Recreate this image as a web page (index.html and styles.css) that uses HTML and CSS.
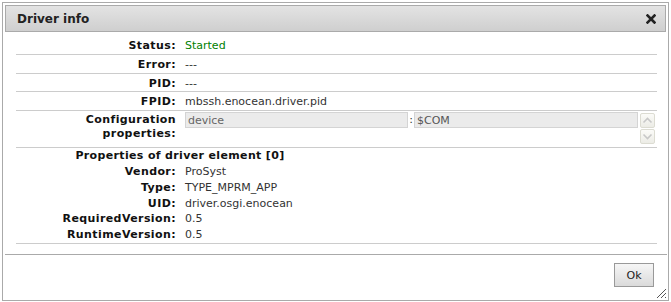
FILE: index.html
```html
<!DOCTYPE html>
<html>
  <head>
    <title>Driver info</title>
    <link rel="stylesheet" href="styles.css">
  </head>
  <body>
    <div class="dialog">
      <div class="titlebar">
        <span class="title">Driver info</span>
        <span class="close" title="Close">
          <svg width="10" height="10" viewBox="0 0 10 10"><path d="M1.5 1.5 L8.5 8.5 M8.5 1.5 L1.5 8.5" stroke="#222" stroke-width="2.6" stroke-linecap="square"/></svg>
        </span>
      </div>

      <div class="content">
        <div class="row"><span class="label">Status:</span><span class="value started">Started</span></div>
        <div class="row"><span class="label">Error:</span><span class="value">---</span></div>
        <div class="row"><span class="label">PID:</span><span class="value">---</span></div>
        <div class="row"><span class="label">FPID:</span><span class="value">mbssh.enocean.driver.pid</span></div>
        <div class="row config">
          <span class="label">Configuration<br>properties:</span>
          <div class="config-edit">
            <div class="pair">
              <input class="field key" type="text" value="device" readonly>
              <span class="sep">:</span>
              <input class="field val" type="text" value="$COM" readonly>
            </div>
            <div class="spin">
              <span class="spin-btn"><svg width="11" height="7" viewBox="0 0 11 7"><path d="M1.5 5.5 L5.5 1.5 L9.5 5.5" fill="none" stroke="#c8c8c8" stroke-width="1.6"/></svg></span>
              <span class="spin-btn"><svg width="11" height="7" viewBox="0 0 11 7"><path d="M1.5 1.5 L5.5 5.5 L9.5 1.5" fill="none" stroke="#c8c8c8" stroke-width="1.6"/></svg></span>
            </div>
          </div>
        </div>

        <div class="element">
          <div class="element-title">Properties of driver element [0]</div>
          <div class="erow"><span class="label">Vendor:</span><span class="value">ProSyst</span></div>
          <div class="erow"><span class="label">Type:</span><span class="value">TYPE_MPRM_APP</span></div>
          <div class="erow"><span class="label">UID:</span><span class="value">driver.osgi.enocean</span></div>
          <div class="erow"><span class="label">RequiredVersion:</span><span class="value">0.5</span></div>
          <div class="erow"><span class="label">RuntimeVersion:</span><span class="value">0.5</span></div>
        </div>
      </div>

      <div class="buttonpane">
        <button class="btn" type="button">Ok</button>
      </div>
      <span class="resize">
        <svg width="12" height="12" viewBox="0 0 12 12"><path d="M11 2 L2 11 M11 6 L6 11 M11 10 L10 11" stroke="#555" stroke-width="1"/></svg>
      </span>
    </div>
  </body>
</html>
```

FILE: styles.css
```css
body {
    margin: 2px;
    font-family: Verdana, "DejaVu Sans", sans-serif;
    font-size: 11px;
    color: #222;
    background: #fff;
}
.dialog {
    position: relative;
    box-sizing: border-box;
    width: 667px;
    height: 299px;
    border: 1px solid #aaa;
    padding: 2px;
    display: flex;
    flex-direction: column;
}
.titlebar {
    height: 25px;
    border: 1px solid #aaa;
    background: linear-gradient(#e3e3e3, #cfcfcf);
    display: flex;
    align-items: center;
    justify-content: space-between;
    padding: 0 9px 0 11px;
}
.title {
    font-weight: bold;
    font-size: 12px;
    color: #222;
}
.close {
    display: flex;
    margin-top: 1px;
}
.content {
    padding: 4px 9px 10px 11px;
    flex: 1;
}
.row {
    display: grid;
    grid-template-columns: 160px 1fr;
    column-gap: 9px;
    padding: 3px 0 1px;
    line-height: 13.8px;
    border-bottom: 1px solid #ccc;
}
.label {
    font-weight: bold;
    text-align: right;
    letter-spacing: 0.4px;
    color: #111;
}
.value {
    color: #333;
}
.started {
    color: #008000;
}
.row.config {
    padding: 2px 0 3px;
}
.config-edit {
    display: flex;
    gap: 2px;
    align-items: flex-start;
    margin-top: -1px;
}
.pair {
    display: flex;
    align-items: center;
    width: 453px;
}
.field {
    box-sizing: border-box;
    height: 16px;
    margin: 0;
    padding: 0 2px;
    border: 1px solid #d4d4d4;
    background: #ebebeb;
    font-family: inherit;
    font-size: 11px;
    color: #666;
    outline: none;
}
.key {
    width: 223px;
}
.val {
    width: 224px;
    color: #555;
}
.sep {
    width: 6px;
    text-align: center;
    color: #333;
}
.spin {
    display: flex;
    flex-direction: column;
    gap: 1px;
    margin-top: 1px;
}
.spin-btn {
    box-sizing: border-box;
    width: 15px;
    height: 15px;
    border: 1px solid #dcdcd2;
    border-radius: 2px;
    background: linear-gradient(#fbfbf8, #ecece6);
    display: flex;
    align-items: center;
    justify-content: center;
}
.element {
    border-bottom: 1px solid #ccc;
    line-height: 15.8px;
}
.element-title {
    width: 328px;
    text-align: center;
    font-weight: bold;
    letter-spacing: 0.35px;
    color: #111;
}
.erow {
    display: grid;
    grid-template-columns: 160px 1fr;
    column-gap: 9px;
}
.buttonpane {
    border-top: 1px solid #aaa;
    margin-right: -1px;
    padding: 8px 13px 11px 0;
    display: flex;
    justify-content: flex-end;
}
.btn {
    width: 40px;
    height: 24px;
    border: 1px solid #999;
    background: linear-gradient(#f6f6f6, #dadada);
    font-family: inherit;
    font-size: 11px;
    color: #222;
    padding: 0;
}
.resize {
    position: absolute;
    right: 1px;
    bottom: 1px;
    display: flex;
}
```
